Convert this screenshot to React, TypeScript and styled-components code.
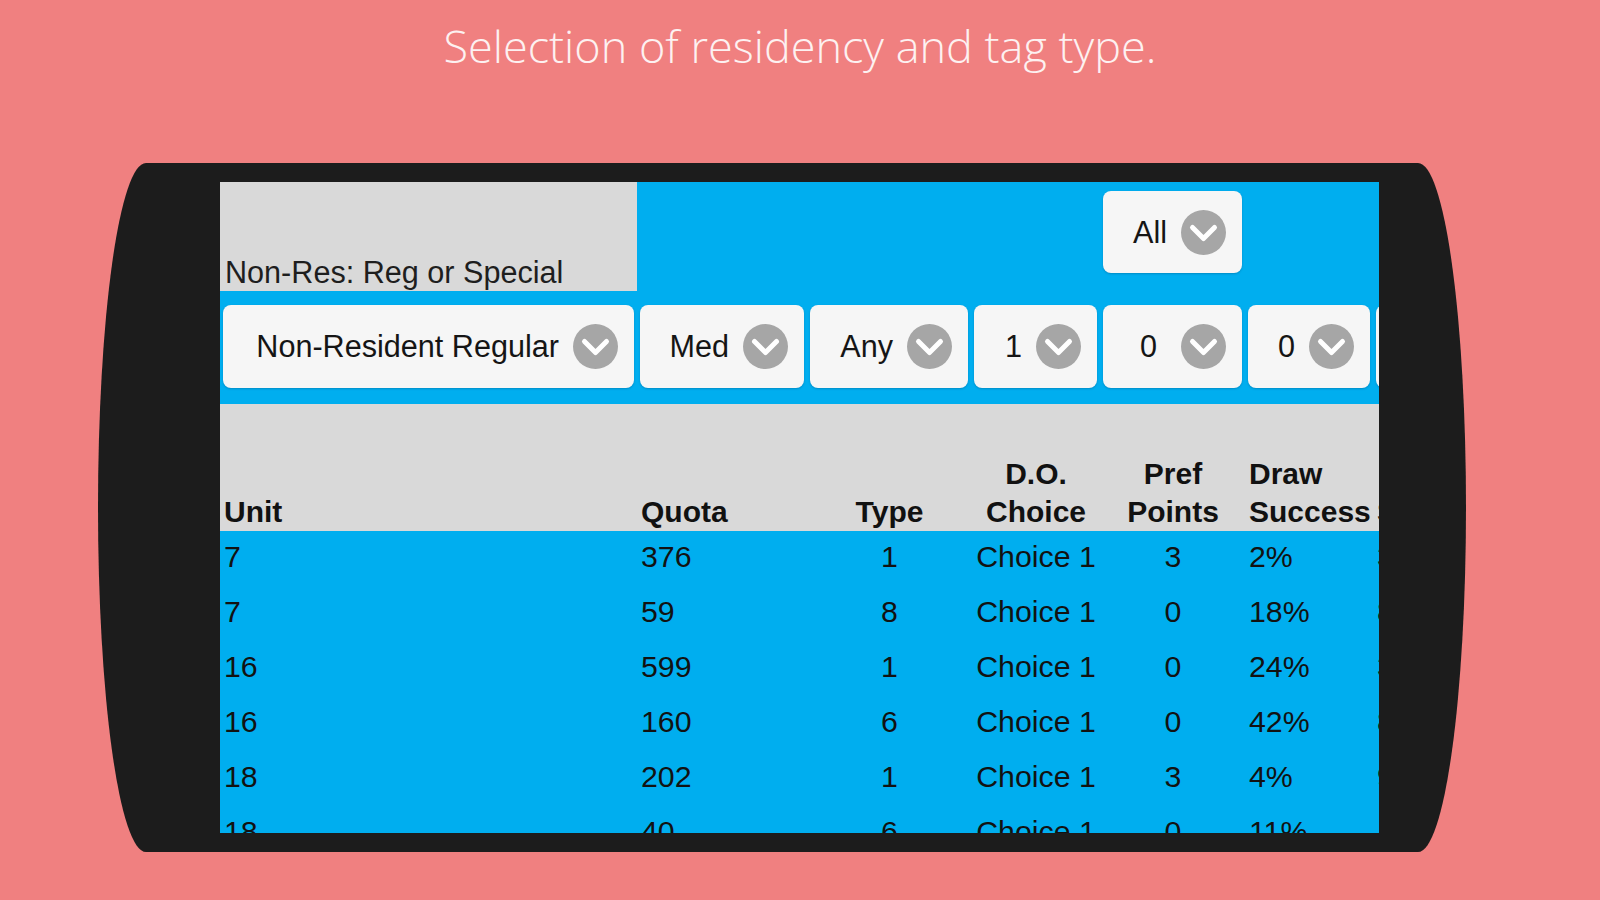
import React from "react";
import styled, { createGlobalStyle } from "styled-components";

const Global = createGlobalStyle`
  html, body { margin: 0; padding: 0; }
  body {
    width: 1600px;
    height: 900px;
    overflow: hidden;
    background: #f08080;
    font-family: "Liberation Sans", Arial, sans-serif;
  }
`;

const Page = styled.div`
  display: flex;
  flex-direction: column;
  width: 1600px;
  height: 900px;
`;

const Title = styled.h1`
  margin: 0;
  height: 94px;
  line-height: 92px;
  text-align: center;
  font-family: "Open Sans", sans-serif;
  font-weight: 300;
  font-size: 45px;
  color: #fdf1f1;
`;

const Device = styled.div`
  margin: 69px 0 0 98px;
  width: 1368px;
  height: 689px;
  box-sizing: border-box;
  padding: 19px 87px 19px 122px;
  background: #1c1c1c;
  border-radius: 48px / 50%;
  display: flex;
`;

const Screen = styled.div`
  flex: 1;
  overflow: hidden;
  background: #00aeef;
  display: flex;
  flex-direction: column;
`;

const COLS = "417px 170px 164px 129px 145px 128px 120px";

const Row = styled.div<{ $h: number; $bg?: string }>`
  display: grid;
  grid-template-columns: ${COLS};
  height: ${(p) => p.$h}px;
  flex: none;
  background: ${(p) => p.$bg || "transparent"};
`;

const LabelCell = styled.div`
  background: #d9d9d9;
  display: flex;
  align-items: flex-end;
  padding: 0 0 2px 5px;
  font-size: 30.6px;
  color: #1e1e1e;
  line-height: 34px;
  white-space: nowrap;
`;

const Cell = styled.div<{ $pt?: number }>`
  padding: ${(p) => p.$pt ?? 0}px 3px 0 3px;
  box-sizing: border-box;
  min-width: 0;
`;

const Dropdown = styled.div<{ $h?: number; $gap?: number }>`
  height: ${(p) => p.$h ?? 83}px;
  background: #f6f6f6;
  border-radius: 8px;
  box-shadow: 0 1px 2px rgba(0, 40, 80, 0.25);
  display: flex;
  align-items: center;
  justify-content: flex-end;
  padding-right: 16px;
  gap: ${(p) => p.$gap ?? 14}px;
  font-size: 30.6px;
  color: #151515;
  white-space: nowrap;
`;

const Chevron = styled.svg`
  width: 45px;
  height: 45px;
  flex: none;
`;

const HeadCell = styled.div<{ $align?: string }>`
  display: flex;
  align-items: flex-end;
  justify-content: ${(p) => p.$align || "flex-start"};
  text-align: ${(p) => (p.$align === "center" ? "center" : "left")};
  padding: 0 3px 0 4px;
  font-size: 30px;
  font-weight: 700;
  line-height: 38px;
  color: #111;
  white-space: nowrap;
`;

const DataCell = styled.div<{ $align?: string }>`
  display: flex;
  align-items: center;
  justify-content: ${(p) => p.$align || "flex-start"};
  padding: 0 3px 4px 4px;
  font-size: 30.3px;
  color: #121212;
  white-space: nowrap;
`;

const Arrow = () => (
  <Chevron viewBox="0 0 45 45">
    <circle cx="22.5" cy="22.5" r="22.5" fill="#a6a6a6" />
    <polyline
      points="11.5,17.5 22.5,28.5 33.5,17.5"
      fill="none"
      stroke="#ffffff"
      strokeWidth="5"
      strokeLinecap="round"
      strokeLinejoin="round"
    />
  </Chevron>
);

const Select = ({ label, gap }: { label: string; gap?: number }) => (
  <Dropdown $gap={gap}>
    <span>{label}</span>
    <Arrow />
  </Dropdown>
);

const rows = [
  ["7", "376", "1", "Choice 1", "3", "2%", "35"],
  ["7", "59", "8", "Choice 1", "0", "18%", "82"],
  ["16", "599", "1", "Choice 1", "0", "24%", "31"],
  ["16", "160", "6", "Choice 1", "0", "42%", "84"],
  ["18", "202", "1", "Choice 1", "3", "4%", "95"],
  ["18", "40", "6", "Choice 1", "0", "11%", "40"],
];

const aligns = ["flex-start", "flex-start", "center", "center", "center", "flex-start", "flex-start"];

export default function App() {
  return (
    <>
      <Global />
      <Page>
        <Title>Selection of residency and tag type.</Title>
        <Device>
          <Screen>
            <Row $h={109}>
              <LabelCell>Non-Res: Reg or Special</LabelCell>
              <Cell />
              <Cell />
              <Cell />
              <Cell $pt={9}>
                <Dropdown $h={82}>
                  <span>All</span>
                  <Arrow />
                </Dropdown>
              </Cell>
              <Cell />
              <Cell />
            </Row>
            <Row $h={113}>
              <Cell $pt={14}>
                <Select label="Non-Resident Regular" />
              </Cell>
              <Cell $pt={14}>
                <Select label="Med" />
              </Cell>
              <Cell $pt={14}>
                <Select label="Any" />
              </Cell>
              <Cell $pt={14}>
                <Select label="1" />
              </Cell>
              <Cell $pt={14}>
                <Select label="0" gap={24} />
              </Cell>
              <Cell $pt={14}>
                <Select label="0" />
              </Cell>
              <Cell $pt={14}>
                <Select label="0" />
              </Cell>
            </Row>
            <Row $h={127} $bg="#d9d9d9">
              <HeadCell>Unit</HeadCell>
              <HeadCell>Quota</HeadCell>
              <HeadCell $align="center">Type</HeadCell>
              <HeadCell $align="center">
                D.O.
                <br />
                Choice
              </HeadCell>
              <HeadCell $align="center">
                Pref
                <br />
                Points
              </HeadCell>
              <HeadCell>
                Draw
                <br />
                Success
              </HeadCell>
              <HeadCell>Sold</HeadCell>
            </Row>
            {rows.map((r, i) => (
              <Row key={i} $h={55}>
                {r.map((v, j) => (
                  <DataCell key={j} $align={aligns[j]}>
                    {v}
                  </DataCell>
                ))}
              </Row>
            ))}
          </Screen>
        </Device>
      </Page>
    </>
  );
}
